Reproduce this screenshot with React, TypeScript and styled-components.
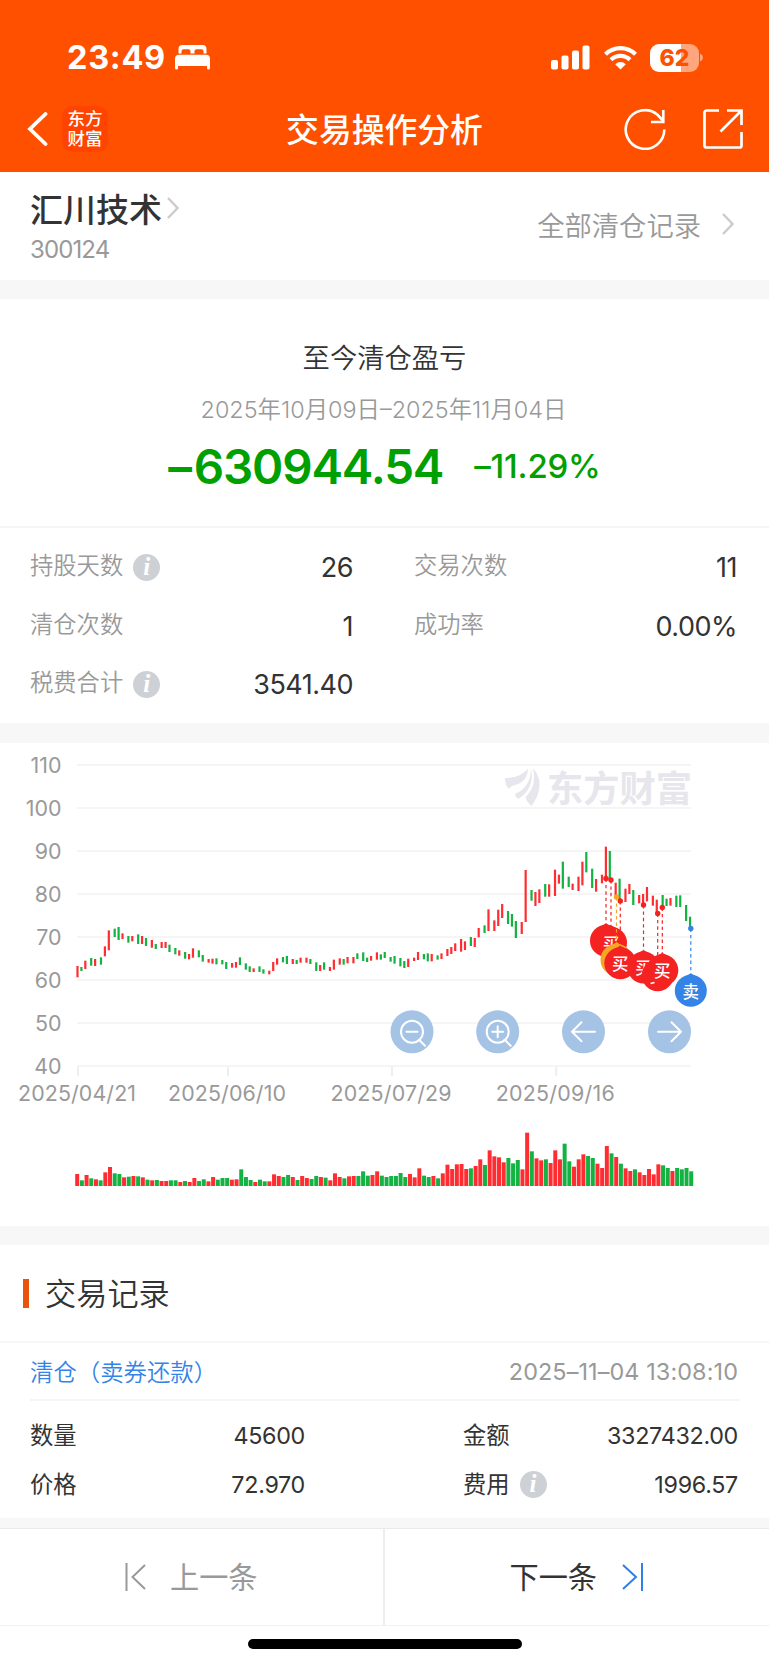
import React from "react";
import styled, { createGlobalStyle } from "styled-components";

const GlobalStyle = createGlobalStyle`
  * {
    box-sizing: border-box;
  }

  body {
    margin: 0;
    background: #fff;
    color: #333;
    font-family: Inter, "Noto Sans CJK SC", sans-serif;
  }
`;

const Page = styled.div`
  width: 769px;
  height: 1665px;
  display: flex;
  flex-direction: column;
  background: #fff;
  overflow: hidden;
`;

const Header = styled.header`
  height: 172px;
  flex: none;
  background: #ff5000;
  color: #fff;
`;

const StatusBar = styled.div`
  height: 86px;
  padding: 29px 66px 0 67px;
  display: flex;
  justify-content: space-between;
`;

const StatusGroup = styled.div`
  height: 57px;
  display: flex;
  align-items: center;
`;

const Time = styled.span`
  font-size: 32.5px;
  font-weight: 750;
  letter-spacing: 0.7px;
  margin-right: 9px;
`;

const Wifi = styled.svg`
  margin-left: 14px;
`;

const Battery = styled.div`
  width: 49px;
  height: 28px;
  margin-left: 13px;
  border-radius: 9px;
  background: linear-gradient(90deg, #fff 63%, #ffa67d 63%);
  color: #ff5000;
  font-size: 23px;
  font-weight: 800;
  line-height: 28px;
  text-align: center;
`;

const NavBar = styled.div`
  height: 86px;
  padding: 0 26px 0 27px;
  display: grid;
  grid-template-columns: 1fr auto 1fr;
  align-items: center;
`;

const NavSide = styled.div<{ $end?: boolean }>`
  display: flex;
  align-items: center;
  gap: ${(p) => (p.$end ? "37px" : "13px")};
  justify-content: ${(p) => (p.$end ? "flex-end" : "flex-start")};
`;

const AppLogo = styled.div`
  width: 46px;
  height: 46px;
  padding-top: 3px;
  border-radius: 10px;
  background: #ff4400;
  font-size: 17.5px;
  font-weight: 500;
  line-height: 19.5px;
  text-align: center;
`;

const Title = styled.h1`
  margin: 0 1px 0 0;
  padding-top: 2px;
  font-size: 32.8px;
  font-weight: 500;
  line-height: 84px;
`;

const StockBar = styled.section`
  height: 108px;
  flex: none;
  padding: 0 35px 0 30px;
  display: flex;
  justify-content: space-between;
`;

const StockName = styled.div`
  display: flex;
  align-items: center;
  gap: 5px;
  height: 40px;
  margin-top: 16px;
  font-size: 33px;
  font-weight: 500;
`;

const StockCode = styled.div`
  margin-top: 6px;
  color: #999;
  font-size: 24px;
  line-height: 32px;
  letter-spacing: -0.9px;
`;

const AllRecords = styled.div`
  display: flex;
  align-items: center;
  gap: 21px;
  height: 104px;
  color: #999;
  font-size: 27.3px;
  font-weight: 350;
`;

const Band = styled.div<{ $height: number }>`
  height: ${(p) => p.$height}px;
  flex: none;
  background: #f7f7f7;
`;

const Summary = styled.section`
  height: 229px;
  flex: none;
  padding-top: 40px;
  border-bottom: 2px solid #f5f5f5;
  text-align: center;
`;

const SummaryTitle = styled.div`
  font-size: 27.3px;
  font-weight: 350;
  line-height: 40px;
`;

const DateRange = styled.div`
  margin: 15px 2px 0 0;
  color: #999;
  font-size: 23.4px;
  font-weight: 350;
  line-height: 32px;
`;

const Profit = styled.div`
  display: flex;
  justify-content: center;
  align-items: center;
  gap: 31px;
  margin-top: 10px;
  height: 60px;
  color: #00a000;
`;

const Amount = styled.span`
  font-size: 47.5px;
  font-weight: 560;
  letter-spacing: -1.2px;
`;

const Sign = styled.span`
  margin-right: 3px;
`;

const Percent = styled.span`
  font-size: 33px;
  font-weight: 530;
  letter-spacing: -0.2px;
`;

const Stats = styled.section`
  height: 195px;
  flex: none;
  padding: 10px 32px 0 30px;
  display: grid;
  grid-template-columns: 323px 323px;
  grid-auto-rows: 58.7px;
  column-gap: 61px;
`;

const Stat = styled.div`
  display: flex;
  align-items: center;
  color: #999;
  font-size: 23.3px;
  font-weight: 350;
`;

const StatLabel = styled.span`
  margin: 0 10px 7px 0;
`;

const StatValue = styled.span`
  margin-left: auto;
  color: #333;
  font-size: 27px;
  font-weight: 380;
  letter-spacing: -0.5px;
`;

const InfoBadge = styled.span`
  width: 27px;
  height: 27px;
  border-radius: 50%;
  background: #cdd1d6;
  color: #fff;
  font-family: "Liberation Serif", serif;
  font-size: 25px;
  font-style: italic;
  font-weight: 700;
  line-height: 26px;
  text-align: center;
`;

const ChartPanel = styled.section`
  height: 483px;
  flex: none;

  svg {
    display: block;
  }
`;

const SectionTitle = styled.h2`
  height: 98px;
  flex: none;
  margin: 0;
  padding-left: 23px;
  display: flex;
  align-items: center;
  gap: 16px;
  border-bottom: 2px solid #f7f7f7;
  font-size: 31.2px;
  font-weight: 350;

  &::before {
    content: "";
    width: 6px;
    height: 29px;
    background: #e8530e;
  }
`;

const SectionText = styled.span`
  padding-bottom: 4px;
`;

const RecordHead = styled.div`
  height: 58px;
  flex: none;
  margin: 0 29px 0 30px;
  display: flex;
  align-items: center;
  justify-content: space-between;
  border-bottom: 2px solid #f5f5f5;
  font-size: 23.4px;
`;

const RecordType = styled.span`
  color: #3384e6;
  font-family: "Noto Sans CJK SC", sans-serif;
  font-weight: 350;
`;

const RecordTime = styled.span`
  color: #999;
  font-weight: 380;
  letter-spacing: 0.1px;
  margin-right: 2px;
`;

const RecordBody = styled.div`
  height: 117px;
  flex: none;
  padding: 10px 30px 0;
  display: grid;
  grid-template-columns: 275px 275px;
  grid-auto-rows: 48.7px;
  column-gap: 158px;
`;

const RecordCell = styled.div`
  display: flex;
  align-items: center;
  font-size: 23.3px;
  font-weight: 370;
`;

const RecordLabel = styled.span`
  margin: 0 10px 3px 0;
`;

const RecordValue = styled.span`
  margin-left: auto;
  letter-spacing: -0.3px;
`;

const Pager = styled.nav`
  height: 98px;
  flex: none;
  display: grid;
  grid-template-columns: 1fr 1fr;
  border-top: 1px solid #eaeaea;
  border-bottom: 1px solid #f0f0f0;
`;

const PagerButton = styled.button<{ $disabled?: boolean }>`
  display: flex;
  align-items: center;
  justify-content: center;
  gap: ${(p) => (p.$disabled ? "23px" : "25px")};
  padding: 0;
  border: 0;
  border-right: ${(p) => (p.$disabled ? "2px solid #eee" : "0")};
  background: none;
  color: ${(p) => (p.$disabled ? "#999" : "#333")};
  font: inherit;
  font-size: 29.2px;
  font-weight: 370;
`;

const PagerText = styled.span`
  padding-bottom: 4px;
`;

const HomeIndicator = styled.div`
  width: 274px;
  height: 10px;
  flex: none;
  margin: 13px auto 0;
  border-radius: 5px;
  background: #000;
`;

const RED = "#ff2d32";
const GREEN = "#14b143";
const STEP = 4.683;
const UNIT = 1.957;

// direction, high, low and volume, in thirds of a pixel
const candles = `
R438-472-36 G441-453-17 R422-447-33 G414-437-23 R417-438-20 G412-434-17 R379-409-41 R331-391-57 G326-351-38 G321-360-36
R340-357-26 G348-368-28 R348-364-30 G343-372-29 R348-372-26 G354-378-19 R360-383-17 G372-387-18 R366-384-15 R366-384-15
G374-396-17 G384-403-17 R391-407-12 G396-416-15 R402-418-12 R385-413-24 G391-412-15 G405-425-20 R417-428-14 R416-431-27
G415-433-19 G420-433-24 G426-447-24 R429-443-19 R426-443-20 G412-435-50 G430-449-27 G439-456-18 R445-456-12 G439-456-19
G448-461-14 R452-463-14 R426-453-35 R415-434-30 G411-427-27 G408-432-33 R417-432-27 G420-432-18 R413-428-30 R413-428-24
G417-432-21 G427-453-30 R435-453-27 G427-449-25 R441-453-17 R419-449-38 R415-434-27 G417-434-23 R411-430-29 R411-430-30
G400-417-30 G397-423-44 G413-426-31 R408-422-33 R397-419-44 G403-419-31 G396-414-27 G411-425-30 G408-431-30 G414-439-39
G423-444-27 R416-441-36 R413-423-26 R396-420-53 G402-418-31 G400-424-27 R402-424-30 G406-419-23 R400-417-38 R387-408-64
R381-402-51 R370-393-65 R357-395-66 R364-390-51 G351-378-53 R354-381-60 R324-352-80 G316-339-63 R268-333-107 R301-333-89
R269-318-86 R252-294-71 G273-312-84 G282-320-68 G303-354-78 R306-342-50 R150-306-160 G210-242-104 R216-258-83 R208-249-77
G192-230-80 R193-230-69 R149-228-107 R164-191-80 G125-206-127 G170-201-74 R191-210-58 R170-213-80 R125-196-95 G96-157-90
G146-204-84 R177-215-67 R164-190-54 R80-176-120 G93-180-98 R188-231-87 G176-243-67 R206-246-53 R192-222-45 G210-255-50
R225-250-41 R222-255-33 R201-244-51 R227-257-35 R239-280-65 G225-260-62 G236-258-54 R234-257-45 G227-261-54 G226-261-50
G255-303-54 G290-323-44`
  .trim()
  .split(/\s+/)
  .map((entry) => {
    const [high, low, volume] = entry.slice(1).split("-").map(Number);
    return { color: entry[0] === "R" ? RED : GREEN, high, low, volume };
  });

const candleX = (i: number) =>
  77.5 + Math.floor((i * STEP) / UNIT + 0.05) * UNIT;

const priceLabels = [110, 100, 90, 80, 70, 60, 50, 40];

const dateLabels = [
  { x: 77, width: 118, text: "2025/04/21" },
  { x: 227, width: 118, text: "2025/06/10" },
  { x: 391, width: 121, text: "2025/07/29" },
  { x: 555.2, width: 119, text: "2025/09/16" },
];

const BUY = "#f52222";
const REPEAT = "#f5a623";
const SELL = "#3384e6";

// pins without text are covered by the next one
const pins = [
  { x: 606, from: 135.5, tip: 180.5, color: BUY },
  { x: 611, from: 137, tip: 182.5, color: BUY, text: "买" },
  { x: 616.5, from: 154, tip: 199.5, color: REPEAT },
  { x: 620.3, from: 158, tip: 203, color: BUY, text: "买" },
  { x: 643.5, from: 162, tip: 207.3, color: BUY, text: "买" },
  { x: 657.7, from: 170.5, tip: 215, color: BUY },
  { x: 662.3, from: 164.5, tip: 210, color: BUY, text: "买" },
  { x: 690.8, from: 185.5, tip: 230.5, color: SELL, text: "卖" },
];

interface PinProps {
  x: number;
  from: number;
  tip: number;
  color: string;
  text?: string;
}

const Pin = ({ x, from, tip, color, text }: PinProps) => (
  <g>
    <line
      x1={x}
      x2={x}
      y1={from}
      y2={tip}
      stroke={color}
      strokeWidth="1.2"
      strokeDasharray="3.4 3"
    />
    <circle cx={x} cy={from} r="2.7" fill={color} />
    <circle cx={x} cy={tip + 17.2} r="16" fill={color} />
    <path d={`M${x} ${tip - 0.3}l11 6.500h-22z`} fill={color} />
    {text && (
      <text
        x={x}
        y={tip + 24}
        fill="#fff"
        fontSize="16.5"
        fontWeight="500"
        textAnchor="middle"
      >
        {text}
      </text>
    )}
  </g>
);

const chartButtons = [
  { x: 412, icon: "M-5.5 0h11M7 8l6 6" },
  { x: 497.7, icon: "M-5.5 0h11M0 -5.5v11M7 8l6 6" },
  { x: 583.5, icon: "M11.5 0h-23M-2 -9.5L-11.5 0L-2 9.5" },
  { x: 669.5, icon: "M-11.5 0h23M2 -9.5L11.5 0L2 9.5" },
];

const Chart = (): JSX.Element => (
  <svg width="769" height="483" viewBox="0 0 769 483">
    {priceLabels.map((price, i) => (
      <g key={price}>
        <rect x="77" y={21 + i * 43} width="614" height="2" fill="#f5f5f6" />
        <text
          x="61.5"
          y={30 + i * 43}
          fill="#999"
          fontSize="21.4"
          textAnchor="end"
        >
          {price}
        </text>
      </g>
    ))}

    <g fill="#e6e6ec">
      <path d="M505 35C514 35 523 32 528 25.500C528 34 523 40 515 42C511 43 509.500 44 509 46C506 43 505 39 505 35z" />
      <path d="M531 25C531 38 526 46 515 51C515.500 54 517 55.500 519 55.500C528 50 534 40 531 25z" />
      <path d="M533 25.500C542 35 542 49 531.500 63C528 60 526 57 525.500 54C533 47 536 37 533 25.500z" />
      <text
        x="547"
        y="58.5"
        fontSize="36.5"
        fontWeight="700"
        textLength="145"
        lengthAdjust="spacingAndGlyphs"
      >
        东方财富
      </text>
    </g>

    {dateLabels.map(({ x, width, text }) => (
      <g key={text}>
        <rect x={x} y="324" width="2" height="9" fill="#eee" />
        <text
          x={x}
          y="358"
          fill="#999"
          fontSize="21.4"
          textAnchor="middle"
          textLength={width}
        >
          {text}
        </text>
      </g>
    ))}

    {candles.map(({ color, high, low, volume }, i) => (
      <g key={i} fill={color}>
        <rect
          x={candleX(i) - 1.1}
          y={77 + high / 3}
          width="2.2"
          height={(low - high) / 3}
        />
        <rect
          x={75.2 + i * 4.687}
          y={443 - volume / 3}
          width="4"
          height={volume / 3}
        />
      </g>
    ))}

    {chartButtons.map(({ x, icon }, i) => (
      <g
        key={x}
        transform={`translate(${x} 288.8)`}
        fill="none"
        stroke="#fff"
        strokeWidth="2"
        strokeLinecap="round"
        strokeLinejoin="round"
      >
        <circle r="21.5" fill="#a5c3e5" stroke="none" />
        {i < 2 && <circle r="11" />}
        <path d={icon} />
      </g>
    ))}

    {pins.map((pin) => (
      <Pin key={pin.x} {...pin} />
    ))}
    <path d="M650.500 240.500l4-1" stroke="#fff" strokeWidth="1.500" />
  </svg>
);

const Chevron = () => (
  <svg width="12" height="22" viewBox="0 0 12 22" fill="none">
    <path d="M1 1l9.500 10L1 21" stroke="#ccc" strokeWidth="2.400" />
  </svg>
);

const BedIcon = () => (
  <svg width="35" height="25" viewBox="0 0 35 25" fill="#fff">
    <path d="M3.500 8.500V4a4 4 0 0 1 4-4h20a4 4 0 0 1 4 4v4.500h-3V6.200a2 2 0 0 0-2-2h-5a2 2 0 0 0-2 2v2.300h-4V6.200a2 2 0 0 0-2-2h-5a2 2 0 0 0-2 2v2.300z" />
    <path d="M4 9.800h27a4 4 0 0 1 4 4V23a1.500 1.500 0 0 1-3 0v-2H3v2a1.500 1.500 0 0 1-3 0v-9.200a4 4 0 0 1 4-4z" />
  </svg>
);

const SignalIcon = () => (
  <svg width="39" height="25" viewBox="0 0 39 25" fill="#fff">
    <rect x="0" y="15" width="7" height="9.500" rx="2" />
    <rect x="10.500" y="10.500" width="7" height="14" rx="2" />
    <rect x="21" y="5.500" width="7" height="19" rx="2" />
    <rect x="31.500" y="0.500" width="7" height="24" rx="2" />
  </svg>
);

const WifiIcon = () => (
  <Wifi width="33" height="25" viewBox="0 0 33 25" fill="none" stroke="#fff">
    <path d="M1.500 9.200a21.500 21.500 0 0 1 30 0" strokeWidth="4.200" />
    <path d="M7 14.800a13.500 13.500 0 0 1 19 0" strokeWidth="4.200" />
    <path
      d="M16.500 24.500l-5.300-5.200a7.500 7.500 0 0 1 10.600 0z"
      fill="#fff"
      stroke="none"
    />
  </Wifi>
);

const BatteryTip = () => (
  <svg width="4" height="9" viewBox="0 0 4 9">
    <path d="M1 0.500Q4 2 4 4.500T1 8.500z" fill="#ffa67d" />
  </svg>
);

const BackIcon = () => (
  <svg width="22" height="34" viewBox="0 0 22 34" fill="none">
    <path
      d="M18.500 2L3 17l15.500 15"
      stroke="#fff"
      strokeWidth="3.800"
      strokeLinecap="round"
    />
  </svg>
);

const RefreshIcon = () => (
  <svg width="42" height="42" viewBox="0 0 42 42" fill="none">
    <path
      d="M40.300 21.500A19.300 19.300 0 1 1 33.500 6.800L39.300 13M39.300 2V14H27"
      stroke="#fff"
      strokeWidth="2.600"
    />
  </svg>
);

const ShareIcon = () => (
  <svg width="40" height="40" viewBox="0 0 40 40" fill="none">
    <path
      d="M16 1.500H3.500a2 2 0 0 0-2 2V36.500a2 2 0 0 0 2 2H36.500a2 2 0 0 0 2-2V23M24 1.500H38.500V16M38.500 1.500L17.500 22.500"
      stroke="#fff"
      strokeWidth="2.700"
    />
  </svg>
);

const EndIcon = ({ flip }: { flip?: boolean }) => (
  <svg width="22" height="28" viewBox="0 0 22 28" fill="none">
    <path
      d={flip ? "M20 0V28M1 2L14 14L1 26" : "M1.500 0V28M20 2L7.500 14L20 26"}
      stroke={flip ? "#2f7fe8" : "#999"}
      strokeWidth="2"
    />
  </svg>
);

const stats = [
  { label: "持股天数", value: "26", info: true },
  { label: "交易次数", value: "11" },
  { label: "清仓次数", value: "1" },
  { label: "成功率", value: "0.00%" },
  { label: "税费合计", value: "3541.40", info: true },
];

const record = [
  { label: "数量", value: "45600" },
  { label: "金额", value: "3327432.00" },
  { label: "价格", value: "72.970" },
  { label: "费用", value: "1996.57", info: true },
];

const App = (): JSX.Element => (
  <Page>
    <GlobalStyle />
    <Header>
      <StatusBar>
        <StatusGroup>
          <Time>23:49</Time>
          <BedIcon />
        </StatusGroup>
        <StatusGroup>
          <SignalIcon />
          <WifiIcon />
          <Battery>62</Battery>
          <BatteryTip />
        </StatusGroup>
      </StatusBar>
      <NavBar>
        <NavSide>
          <BackIcon />
          <AppLogo>
            东方
            <br />
            财富
          </AppLogo>
        </NavSide>
        <Title>交易操作分析</Title>
        <NavSide $end>
          <RefreshIcon />
          <ShareIcon />
        </NavSide>
      </NavBar>
    </Header>

    <StockBar>
      <div>
        <StockName>
          汇川技术
          <Chevron />
        </StockName>
        <StockCode>300124</StockCode>
      </div>
      <AllRecords>
        全部清仓记录
        <Chevron />
      </AllRecords>
    </StockBar>
    <Band $height={19} />

    <Summary>
      <SummaryTitle>至今清仓盈亏</SummaryTitle>
      <DateRange>2025年10月09日–2025年11月04日</DateRange>
      <Profit>
        <Amount>
          <Sign>–</Sign>630944.54
        </Amount>
        <Percent>–11.29%</Percent>
      </Profit>
    </Summary>
    <Stats>
      {stats.map(({ label, value, info }) => (
        <Stat key={label}>
          <StatLabel>{label}</StatLabel>
          {info && <InfoBadge>i</InfoBadge>}
          <StatValue>{value}</StatValue>
        </Stat>
      ))}
    </Stats>
    <Band $height={20} />

    <ChartPanel>
      <Chart />
    </ChartPanel>
    <Band $height={19} />

    <SectionTitle>
      <SectionText>交易记录</SectionText>
    </SectionTitle>
    <RecordHead>
      <RecordType>清仓（卖券还款）</RecordType>
      <RecordTime>2025–11–04 13:08:10</RecordTime>
    </RecordHead>
    <RecordBody>
      {record.map(({ label, value, info }) => (
        <RecordCell key={label}>
          <RecordLabel>{label}</RecordLabel>
          {info && <InfoBadge>i</InfoBadge>}
          <RecordValue>{value}</RecordValue>
        </RecordCell>
      ))}
    </RecordBody>
    <Band $height={10} />

    <Pager>
      <PagerButton $disabled>
        <EndIcon />
        <PagerText>上一条</PagerText>
      </PagerButton>
      <PagerButton>
        <PagerText>下一条</PagerText>
        <EndIcon flip />
      </PagerButton>
    </Pager>
    <HomeIndicator />
  </Page>
);

export default App;
